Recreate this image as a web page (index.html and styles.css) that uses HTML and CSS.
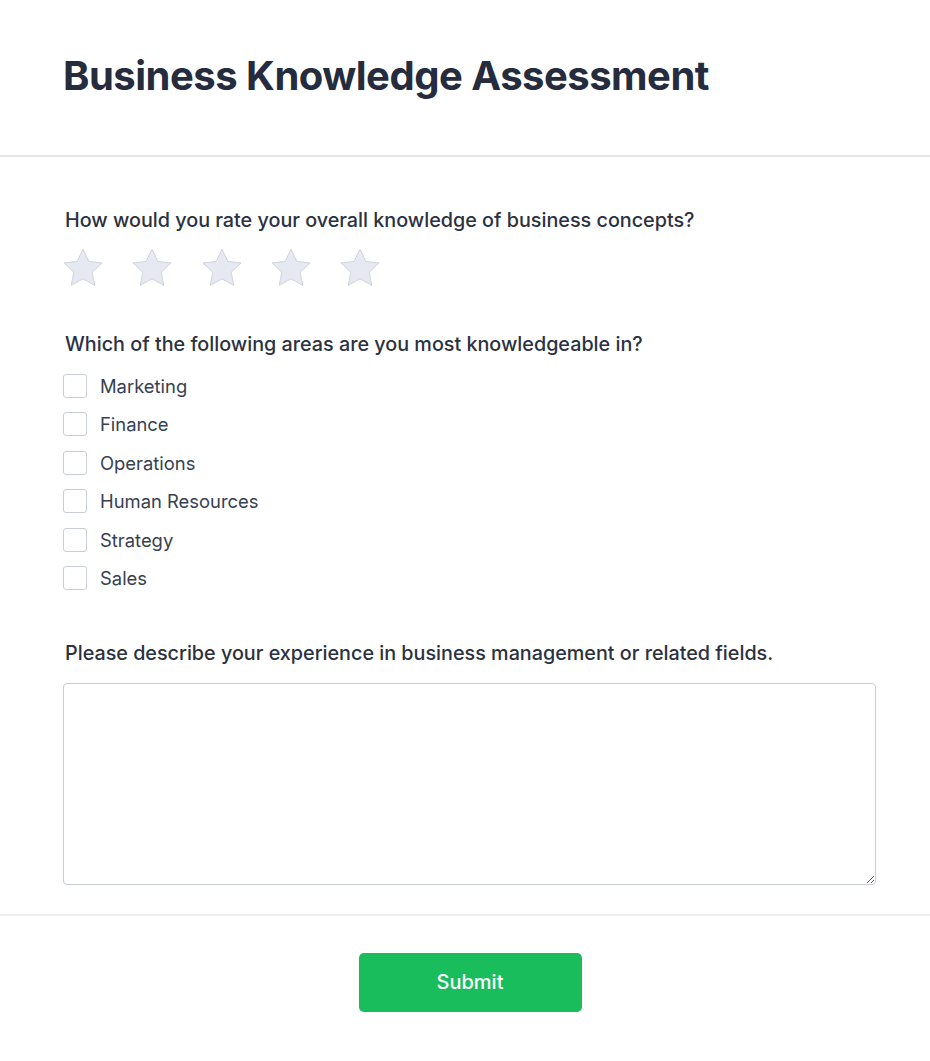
FILE: index.html
```html
<!DOCTYPE html>
<html lang="en">
<head>
    <meta charset="UTF-8">
    <meta name="viewport" content="width=device-width, initial-scale=1.0">
    <title>Business Knowledge Assessment</title>
    <link rel="stylesheet" href="styles.css">
</head>
<body>
    <div class="survey">
        <div class="header">
            <h1 class="title">Business Knowledge Assessment</h1>
        </div>

        <form class="body">
            <div class="question">
                <p class="question-label">How would you rate your overall knowledge of business concepts?</p>
                <div class="rating">
                    <svg class="star" viewBox="0 0 24 24"><path d="M12 2.6l2.9 6.1 6.6.8-4.9 4.6 1.3 6.6L12 17.4l-5.9 3.3 1.3-6.6-4.9-4.6 6.6-.8z"/></svg>
                    <svg class="star" viewBox="0 0 24 24"><path d="M12 2.6l2.9 6.1 6.6.8-4.9 4.6 1.3 6.6L12 17.4l-5.9 3.3 1.3-6.6-4.9-4.6 6.6-.8z"/></svg>
                    <svg class="star" viewBox="0 0 24 24"><path d="M12 2.6l2.9 6.1 6.6.8-4.9 4.6 1.3 6.6L12 17.4l-5.9 3.3 1.3-6.6-4.9-4.6 6.6-.8z"/></svg>
                    <svg class="star" viewBox="0 0 24 24"><path d="M12 2.6l2.9 6.1 6.6.8-4.9 4.6 1.3 6.6L12 17.4l-5.9 3.3 1.3-6.6-4.9-4.6 6.6-.8z"/></svg>
                    <svg class="star" viewBox="0 0 24 24"><path d="M12 2.6l2.9 6.1 6.6.8-4.9 4.6 1.3 6.6L12 17.4l-5.9 3.3 1.3-6.6-4.9-4.6 6.6-.8z"/></svg>
                </div>
            </div>

            <div class="question">
                <p class="question-label">Which of the following areas are you most knowledgeable in?</p>
                <div class="choices">
                    <label class="choice"><span class="box"></span>Marketing</label>
                    <label class="choice"><span class="box"></span>Finance</label>
                    <label class="choice"><span class="box"></span>Operations</label>
                    <label class="choice"><span class="box"></span>Human Resources</label>
                    <label class="choice"><span class="box"></span>Strategy</label>
                    <label class="choice"><span class="box"></span>Sales</label>
                </div>
            </div>

            <div class="question">
                <p class="question-label">Please describe your experience in business management or related fields.</p>
                <textarea class="answer"></textarea>
            </div>
        </form>

        <div class="footer">
            <button type="button" class="submit">Submit</button>
        </div>
    </div>
</body>
</html>
```

FILE: styles.css
```css
* {
    margin: 0;
    padding: 0;
    box-sizing: border-box;
    font-family: Inter, 'Noto Sans', sans-serif;
}

body {
    background: #fff;
    color: #1f2937;
}

.header {
    padding: 52px 54px 55px 63px;
    border-bottom: 2px solid #e5e7eb;
}

.title {
    font-size: 40px;
    font-weight: 700;
    color: #252c3d;
    line-height: 48px;
    letter-spacing: -0.5px;
}

.body {
    padding: 50px 54px 29px 63px;
}

.question {
    margin-bottom: 37px;
}

.question:last-child {
    margin-bottom: 0;
}

.question-label {
    font-size: 19.75px;
    font-weight: 500;
    color: #2b3140;
    margin-left: 2px;
    margin-bottom: 17px;
    line-height: 26px;
}

.rating {
    display: flex;
    gap: 21.25px;
    margin-top: -6px;
    padding-bottom: 2px;
    margin-left: -4px;
}

.star {
    width: 48px;
    height: 48px;
    fill: #e6e9f1;
    stroke: #cfd4de;
    stroke-width: 0.5;
    stroke-linejoin: round;
}

.choices {
    display: flex;
    flex-direction: column;
    gap: 14.4px;
    margin-top: 1px;
    padding-bottom: 13px;
}

.choice {
    display: flex;
    align-items: center;
    gap: 13px;
    font-size: 18.4px;
    color: #374151;
    line-height: 24px;
}

.box {
    width: 24px;
    height: 24px;
    border: 1px solid #c9ced6;
    border-radius: 3px;
    background: #fff;
}

.answer {
    display: block;
    width: 100%;
    height: 202px;
    border: 1px solid #c9ced6;
    border-radius: 4px;
    resize: vertical;
    font-size: 16px;
    padding: 10px;
    outline: none;
}

.footer {
    border-top: 2px solid #eceef2;
    padding: 37px 54px 49px 64px;
    display: flex;
    justify-content: center;
}

.submit {
    width: 223px;
    height: 59px;
    background: #1abd5c;
    color: #fff;
    border: none;
    border-radius: 5px;
    font-size: 20px;
    font-weight: 500;
    cursor: pointer;
}
```
